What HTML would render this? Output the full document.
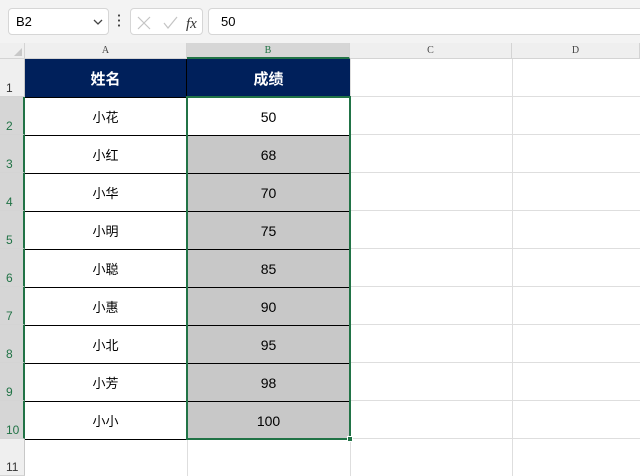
<!DOCTYPE html><html><head><meta charset="utf-8"><style>
*{margin:0;padding:0;box-sizing:border-box}
body{width:640px;height:476px;overflow:hidden;background:#fff;font-family:"Liberation Sans","Noto Sans CJK SC",sans-serif;position:relative}
.a{position:absolute}
.tb{left:0;top:0;width:640px;height:43px;background:#f3f3f3}
.box{background:#fff;border:1px solid #d6d6d6;border-radius:4px;height:27px;top:8px}
.ch{top:43px;height:16px;background:#efefef;border-right:1px solid #d4d4d4;border-bottom:1px solid #d4d4d4;font-family:"Liberation Serif",serif;font-size:10px;color:#444;text-align:center;line-height:16px}
.rh{left:0;width:25px;background:#efefef;border-bottom:1px solid #d4d4d4;border-right:1px solid #c8c8c8;font-family:"Liberation Sans",sans-serif;font-size:12px;color:#333;padding-left:6px;display:flex;align-items:flex-end;padding-bottom:1px}
.rh.s{background:#d6d6d6;color:#217346;border-right:2px solid #217346}
.gl{background:#dedede}
.c{display:flex;align-items:center;justify-content:center;font-size:14px;color:#000}
</style></head><body>
<div class="a tb"></div>
<div class="a box" style="left:8px;width:101px"><span class="a" style="left:7px;top:5px;font-size:13px">B2</span><svg class="a" style="left:84px;top:9px" width="10" height="8"><path d="M1 2l4 4 4-4" fill="none" stroke="#444" stroke-width="1.3"/></svg></div>
<div class="a" style="left:118px;top:13px;width:2px;height:14px;background:radial-gradient(circle,#444 1px,transparent 1.2px) 0 0/2px 5px"></div>
<div class="a box" style="left:130px;width:73px"><svg class="a" style="left:5px;top:6px" width="66" height="16"><path d="M2 2l12 12M14 2L2 14" stroke="#c4c4c4" stroke-width="1.2"/><path d="M28 8l4 5 9-11" fill="none" stroke="#c4c4c4" stroke-width="1.2"/><text x="50" y="13" font-family="Liberation Serif" font-style="italic" font-size="15" fill="#333">fx</text></svg></div>
<div class="a box" style="left:208px;width:440px"><span class="a" style="left:12px;top:5px;font-size:13px">50</span></div>
<div class="a" style="left:0;top:43px;width:25px;height:16px;background:#efefef;border-right:1px solid #d4d4d4;border-bottom:1px solid #d4d4d4"></div>
<svg class="a" style="left:14px;top:48px" width="9" height="9"><path d="M8 0V8H0z" fill="#c8c8c8"/></svg>
<div class="a ch" style="left:25px;width:162px">A</div>
<div class="a ch" style="left:187px;width:163px;background:#d6d6d6;color:#217346;border-bottom:2px solid #217346">B</div>
<div class="a ch" style="left:350px;width:162px">C</div>
<div class="a ch" style="left:512px;width:128px">D</div>
<div class="a gl" style="left:350px;top:59px;width:1px;height:417px"></div>
<div class="a gl" style="left:512px;top:59px;width:1px;height:417px"></div>
<div class="a gl" style="left:187px;top:439px;width:1px;height:37px"></div>
<div id="g"></div>
<script>
var names=["小花","小红","小华","小明","小聪","小惠","小北","小芳","小小"],vals=[50,68,70,75,85,90,95,98,100],h='';
h+='<div class="a rh" style="top:59px;height:38px">1</div>';
for(var i=0;i<10;i++){var t=59+i*38;h+='<div class="a gl" style="left:350px;top:'+(t+37)+'px;width:290px;height:1px"></div>';}
h+='<div class="a c" style="left:25px;top:59px;width:162px;height:38px;background:#00205b;color:#fff;font-weight:bold;font-size:15px;border-right:1px solid #000">姓名</div>';
h+='<div class="a c" style="left:187px;top:59px;width:163px;height:38px;background:#00205b;color:#fff;font-weight:bold;font-size:15px">成绩</div>';
for(var i=0;i<9;i++){var t=97+i*38;
h+='<div class="a rh s" style="top:'+t+'px;height:38px">'+(i+2)+'</div>';
h+='<div class="a c" style="left:25px;top:'+t+'px;width:162px;height:38px;border-top:1px solid #000;border-right:1px solid #000;font-size:13px">'+names[i]+'</div>';
h+='<div class="a c" style="left:187px;top:'+t+'px;width:163px;height:38px;border-top:1px solid #000;background:'+(i?'#c8c8c8':'#fff')+'">'+vals[i]+'</div>';}
h+='<div class="a" style="left:25px;top:439px;width:325px;height:1px;background:#000"></div>';
h+='<div class="a rh" style="top:439px;height:37px">11</div>';
h+='<div class="a" style="left:186px;top:96px;width:165px;height:344px;border:2px solid #217346"></div>';
h+='<div class="a" style="left:347px;top:436px;width:6px;height:6px;background:#217346;border:1px solid #fff"></div>';
document.getElementById('g').innerHTML=h;
</script>
</body></html>
